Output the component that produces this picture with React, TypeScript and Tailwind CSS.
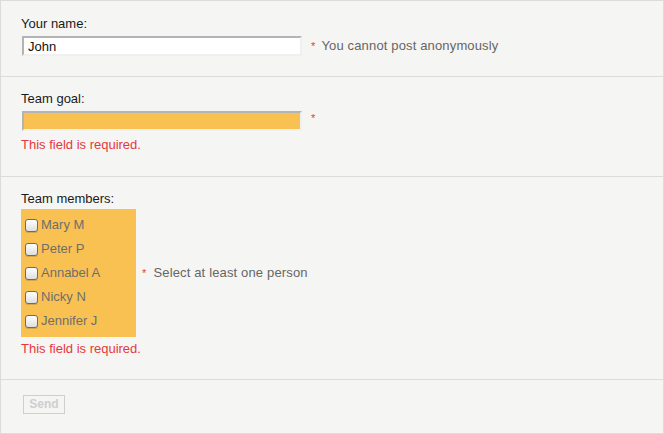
const members = ["Mary M", "Peter P", "Annabel A", "Nicky N", "Jennifer J"];

function Star() {
  return <span className="text-[#e5393d] text-[11px] leading-none">*</span>;
}

export default function App() {
  return (
    <div
      className="w-[664px] h-[434px] border border-[#dcdcda] bg-[#f5f5f3] text-[13px] text-[#1a1a1a] flex flex-col"
      style={{ fontFamily: '"Liberation Sans", Arial, sans-serif' }}
    >
      {/* name */}
      <div className="h-[76px] border-b border-[#dcdcda] pl-[20px] pt-[15px]">
        <label className="block leading-[16px]">Your name:</label>
        <div className="mt-[4px] flex items-center">
          <input
            type="text"
            defaultValue="John"
            className="ml-px w-[280px] h-[20px] bg-white border-2 border-t-[#b4b4b4] border-l-[#b4b4b4] border-r-[#f0f0f0] border-b-[#f0f0f0] px-[4px] text-[13px] text-[#111] outline-none"
          />
          <span className="ml-[9px] flex items-center gap-[6px] text-[#666] tracking-[0.15px]">
            <Star />
            You cannot post anonymously
          </span>
        </div>
      </div>

      {/* goal */}
      <div className="h-[100px] border-b border-[#dcdcda] pl-[20px] pt-[14px]">
        <label className="block leading-[16px]">Team goal:</label>
        <div className="mt-[4px] flex items-center">
          <input
            type="text"
            className="ml-px w-[280px] h-[20px] bg-[#f9c152] border-2 border-t-[#b4b4b4] border-l-[#b4b4b4] border-r-[#f0f0f0] border-b-[#f0f0f0] px-[4px] outline-none"
          />
          <span className="ml-[9px] -mt-[6px]">
            <Star />
          </span>
        </div>
        <p className="mt-[6px] leading-[16px] text-[#e5393d]">This field is required.</p>
      </div>

      {/* members */}
      <div className="h-[203px] border-b border-[#dcdcda] pl-[20px] pt-[14px]">
        <label className="block leading-[16px]">Team members:</label>
        <div className="mt-[2px] flex items-center">
          <div className="w-[115px] bg-[#f9c152] py-[4px] pl-[4px]">
            {members.map((m) => (
              <label key={m} className="h-[24px] flex items-center gap-[3px] text-[#6e6e6e]">
                <span className="w-[13px] h-[13px] rounded-[3px] border border-[#6b6b6b] bg-gradient-to-b from-white to-[#dedede] shadow-[0_1px_0_rgba(0,0,0,0.15)]" />
                {m}
              </label>
            ))}
          </div>
          <span className="ml-[6px] flex items-center gap-[7px] text-[#666] tracking-[0.15px]">
            <Star />
            Select at least one person
          </span>
        </div>
        <p className="mt-[4px] leading-[16px] text-[#e5393d]">This field is required.</p>
      </div>

      {/* send */}
      <div className="flex-1 pl-[22px] pt-[14px]">
        <button
          type="button"
          disabled
          className="h-[19px] w-[42px] border border-[#cfcfcf] text-[12px] font-bold text-[#cfcfcf] leading-none"
        >
          Send
        </button>
      </div>
    </div>
  );
}
